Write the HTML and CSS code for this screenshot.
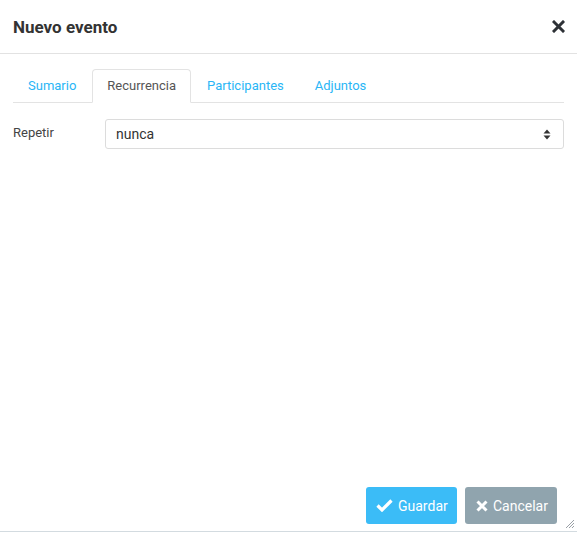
FILE: index.html
```html
<!DOCTYPE html>
<html lang="es">
<head>
<meta charset="utf-8">
<title>Nuevo evento</title>
<link rel="stylesheet" href="styles.css">
</head>
<body>
<div class="dialog">
  <header class="header">
    <h1 class="title">Nuevo evento</h1>
    <svg class="close" width="13" height="13" viewBox="0 0 13 13"><path d="M2 2 L11 11 M11 2 L2 11" stroke="#2d3136" stroke-width="3" stroke-linecap="square"/></svg>
  </header>
  <div class="content">
    <ul class="tabs">
      <li class="tab">Sumario</li>
      <li class="tab active">Recurrencia</li>
      <li class="tab">Participantes</li>
      <li class="tab">Adjuntos</li>
    </ul>
    <div class="row">
      <label class="label">Repetir</label>
      <div class="select">
        <span class="value">nunca</span>
        <svg class="arrows" width="8" height="11" viewBox="0 0 8 11"><path d="M4 0.5 L7.5 4.5 H0.5 Z M4 10.5 L7.5 6.5 H0.5 Z" fill="#333"/></svg>
      </div>
    </div>
  </div>
  <footer class="footer">
    <button class="btn btn-save">
      <svg class="icon" width="17" height="13" viewBox="0 0 17 13"><path d="M1.5 6.5 L6 11 L15.5 1.5" stroke="#fff" stroke-width="3.2" fill="none"/></svg>
      Guardar
    </button>
    <button class="btn btn-cancel">
      <svg class="icon" width="12" height="12" viewBox="0 0 12 12"><path d="M1.5 1.5 L10.5 10.5 M10.5 1.5 L1.5 10.5" stroke="#fff" stroke-width="3"/></svg>
      Cancelar
    </button>
  </footer>
  <svg class="grip" width="10" height="10" viewBox="0 0 10 10"><path d="M9 1 L1 9 M9 4 L4 9 M9 7 L7 9" stroke="#9aa0a6" stroke-width="1"/></svg>
</div>
</body>
</html>
```
FILE: styles.css
```css
* { box-sizing: border-box; }
html, body { margin: 0; padding: 0; background: #fff; }
body { font-family: Roboto, "Liberation Sans", sans-serif; color: #444; }

.dialog {
  position: relative;
  height: 532px;
  display: flex;
  flex-direction: column;
  border-bottom: 1px solid #d3dbe0;
}

.header {
  height: 54px;
  flex: none;
  display: flex;
  align-items: center;
  justify-content: space-between;
  padding: 0 12px 0 13px;
  border-bottom: 1px solid #e2e2e2;
}
.title {
  margin: 0;
  font-size: 17px;
  font-weight: 700;
  color: #333;
}
.close { display: block; }

.content {
  flex: 1;
  padding: 15px 13px 0 13px;
}

.tabs {
  list-style: none;
  margin: 0;
  padding: 0;
  display: flex;
  border-bottom: 1px solid #e3e3e3;
}
.tab {
  font-size: 13px;
  line-height: 18px;
  padding: 7px 14px;
  border: 1px solid transparent;
  border-radius: 4px 4px 0 0;
  margin-bottom: -1px;
  margin-right: 1px;
  color: #29b6f6;
}
.tab.active {
  color: #555;
  background: #fff;
  border-color: #e3e3e3 #e3e3e3 #fff;
}

.row {
  display: flex;
  align-items: center;
  margin-top: 16px;
}
.label {
  width: 92px;
  flex: none;
  font-size: 13px;
  color: #444;
  position: relative;
  top: -2px;
}
.select {
  flex: 1;
  height: 30px;
  border: 1px solid #dcdcdc;
  border-radius: 3px;
  display: flex;
  align-items: center;
  justify-content: space-between;
  padding: 0 12px 0 10px;
}
.value { font-size: 14px; color: #333; }
.arrows { display: block; flex: none; }

.footer {
  flex: none;
  display: flex;
  justify-content: flex-end;
  gap: 8px;
  padding: 0 20px 7px 0;
}
.btn {
  height: 37px;
  border: none;
  border-radius: 3px;
  color: #fff;
  font-family: Roboto, "Liberation Sans", sans-serif;
  font-size: 14px;
  display: flex;
  align-items: center;
  gap: 5px;
  padding: 0 10px;
  white-space: nowrap;
}
.icon { flex: none; display: block; }
.btn-save { background: #3bbcf7; width: 91px; }
.btn-cancel { background: #90a4ae; width: 92px; padding-left: 11px; }

.grip {
  position: absolute;
  right: 2px;
  bottom: 2px;
}
```
